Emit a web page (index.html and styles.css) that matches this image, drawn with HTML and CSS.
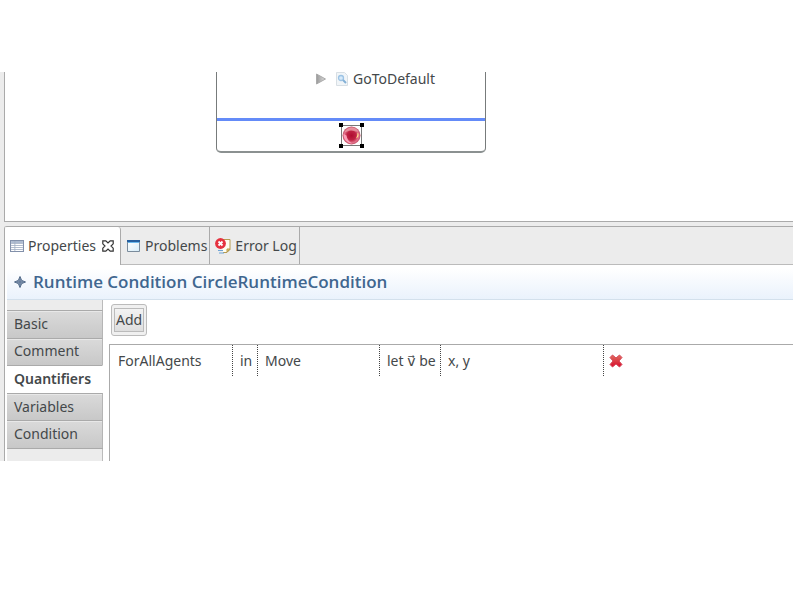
FILE: index.html
```html
<!DOCTYPE html>
<html lang="en">
<head>
<meta charset="utf-8">
<meta name="viewport" content="width=device-width, initial-scale=1">
<title>Runtime Condition</title>
<link rel="stylesheet" href="styles.css">
</head>
<body>
<main class="workbench">
  <section class="editor" aria-label="Diagram editor">
    <div class="node">
      <div class="tree-row">
        <svg width="10" height="12" viewBox="0 0 10 12"><defs><linearGradient id="arrow"><stop offset="0" stop-color="#999"/><stop offset="1" stop-color="#ddd"/></linearGradient></defs><path d="M.5 1v10L9.500 6z" fill="url(#arrow)" stroke="#aaa"/></svg>
        <svg width="12" height="14" viewBox="0 0 12 14"><path d="M.5 .5h8l3 3v10H.5z" fill="#f1f5f8" stroke="#d8dfe4"/><circle cx="5" cy="6" r="2.500" fill="#d7eafa" stroke="#9cc3e4" stroke-width="1.300"/><path d="M7 8l3 3" stroke="#84b0d6" stroke-width="2"/></svg>
        <span>GoToDefault</span>
      </div>
      <div class="node-footer">
        <svg width="25" height="25" viewBox="0 0 25 25"><defs><radialGradient id="ball" cx=".5" cy=".5" r=".5"><stop offset="0" stop-color="#b00c30"/><stop offset=".5" stop-color="#be2343"/><stop offset=".8" stop-color="#e2708a"/><stop offset="1" stop-color="#c04d64"/></radialGradient></defs><path d="M2 2.500h20M2 22.500h20M2.500 2v20M22.500 2v20" stroke="#777" fill="none"/><circle cx="12.500" cy="12.500" r="9" fill="url(#ball)"/><path d="M5.500 9.500C8 3.500 16 2.500 19.500 8.500c-4 .5-5-1.500-8-1-2 .3-3 1-6 2z" fill="#e79aa2" opacity=".8"/><path d="M4.500 11c0 6 4 9 9 9.500-4-2-5-4-6-8z" fill="#ffabc2" opacity=".85"/><path d="M18.500 9.500c2 2 1 5-1.500 6 1-2 1.500-3.500 1.500-6z" fill="#ffe08a"/><path d="M0 0h4v4H0zM21 0h4v4h-4zM0 21h4v4H0zM21 21h4v4h-4z" fill="#000"/></svg>
      </div>
    </div>
  </section>

  <section class="view">
    <div class="tabs" role="tablist">
      <button class="tab tab-active" role="tab" aria-selected="true">
        <svg width="14" height="12" viewBox="0 0 13 12" preserveAspectRatio="none"><path d="M.5 .5h12v11H.5z" fill="#fff" stroke="#8290aa"/><path d="M1 1h11v2H1z" fill="#aebbd0"/><path d="M1 3.500h11M1 5.500h11M1 7.500h11M1 9.500h11M4.500 1v10" stroke="#a3afc4" stroke-width=".8"/></svg>
        <span>Properties</span>
        <svg class="close" width="12" height="12" viewBox="0 0 12 12"><path d="M.8 .8h3L6 3 8.200 .8h3v3L9 6l2.200 2.200v3h-3L6 9l-2.200 2.200h-3v-3L3 6 .8 3.800z" fill="#fff" stroke="#333" stroke-width="1.200"/></svg>
      </button>
      <button class="tab" role="tab" aria-selected="false">
        <svg width="13" height="12" viewBox="0 0 13 12"><defs><linearGradient id="pane" x2="1" y2="1"><stop stop-color="#fff"/><stop offset="1" stop-color="#d5ecf8"/></linearGradient></defs><path d="M.5 .5h12v11H.5z" fill="url(#pane)" stroke="#7b8c9c"/><path d="M0 0h13v2H0z" fill="#245f9f"/><path d="M1 2.500h11" stroke="#69b9ee"/></svg>
        <span>Problems</span>
      </button>
      <button class="tab tab-log" role="tab" aria-selected="false">
        <svg width="16" height="16" viewBox="0 0 16 16"><path d="M5 1.500h10v10l-3 3H8" fill="#fffdf0" stroke="#b69b50"/><path d="M15 11h-3v3z" fill="#e4c56e" stroke="#b69b50"/><path d="M3 12.500h5M4 15h5" stroke="#6fa4d5"/><circle cx="5.500" cy="5.500" r="5.400" fill="#e5323f"/><path d="M3.500 3.500l4 4m0-4l-4 4" stroke="#fff" stroke-width="1.800"/></svg>
        <span>Error Log</span>
      </button>
    </div>

    <header class="title">
      <svg width="12" height="12" viewBox="0 0 12 12"><path d="M6 .5l1.600 3.900L11.500 6 7.600 7.600 6 11.500 4.400 7.600 .5 6l3.900-1.600z" fill="#91a3bb" stroke="#4d6685"/><path d="M6 3v6M3 6h6" stroke="#5b7392"/></svg>
      <h1>Runtime Condition CircleRuntimeCondition</h1>
    </header>

    <div class="content">
      <nav class="side">
        <div class="sections">
          <button class="section">Basic</button>
          <button class="section">Comment</button>
          <button class="section section-active">Quantifiers</button>
          <button class="section">Variables</button>
          <button class="section">Condition</button>
        </div>
      </nav>
      <div class="page">
        <button class="add"><span>Add</span></button>
        <div class="list">
          <table>
            <colgroup><col class="c-name"><col class="c-in"><col class="c-set"><col class="c-let"><col class="c-vars"><col></colgroup>
            <tbody>
              <tr>
                <td>ForAllAgents</td>
                <td>in</td>
                <td>Move</td>
                <td>let <span class="vector">v⃗</span> be</td>
                <td>x, y</td>
                <td><button class="remove" aria-label="Remove"><svg width="14" height="14" viewBox="0 0 14 14"><defs><linearGradient id="cross" x2="0" y2="1"><stop stop-color="#e0705f"/><stop offset="1" stop-color="#d8092b"/></linearGradient></defs><path d="M3.500 1L7 4l3.500-3L13 3.500 10 7l3 3.500-2.500 2.500L7 10l-3.500 3L1 10.500 4 7 1 3.500z" fill="url(#cross)" stroke="#d6485a" stroke-linejoin="round"/></svg></button></td>
              </tr>
            </tbody>
          </table>
        </div>
      </div>
    </div>
  </section>
</main>
</body>
</html>
```
FILE: styles.css
```css
* { box-sizing: border-box; }

body {
  margin: 0;
  padding: 72px 7px 0 0;
  background: #fff;
  color: #44484a;
  font: 14px/20px "Noto Sans", "DejaVu Sans", sans-serif;
}

button {
  margin: 0;
  padding: 0;
  border: 0;
  background: none;
  color: inherit;
  font: inherit;
}

svg { display: block; flex: none; }

.workbench {
  display: flex;
  flex-direction: column;
  gap: 4px;
  padding-left: 4px;
  background: #ececec;
}

.editor {
  position: relative;
  height: 150px;
  border-left: 1px solid #aaa;
  border-bottom: 1px solid #aaa;
  background: #fff;
}

.node {
  position: absolute;
  top: 0;
  left: 211px;
  width: 270px;
  border: 1px solid #777b7b;
  border-top: 0;
  border-bottom-width: 2px;
  border-bottom-color: #8b9191;
  border-radius: 0 0 5px 5px;
}

.tree-row {
  display: flex;
  align-items: center;
  gap: 5px;
  height: 46px;
  padding: 0 0 32px 99px;
}

.tree-row svg:first-child { margin-right: 5px; }

.node-footer {
  display: flex;
  justify-content: center;
  height: 33px;
  padding-top: 2px;
  border-top: 3px solid #648bf8;
}

.view {
  border-left: 1px solid #aaa;
  border-top: 1px solid #aaa;
  border-top-left-radius: 3px;
  background: #fff;
}

.tabs {
  display: flex;
  height: 38px;
  border-bottom: 1px solid #bbb;
  background: #ececec;
}

.tab {
  display: flex;
  align-items: center;
  gap: 5px;
  height: 37px;
  padding: 0 2px 0 6px;
  border-right: 1px solid #aaa;
  white-space: nowrap;
}

.tab-active {
  gap: 4px;
  height: 38px;
  padding: 0 6px 1px 5px;
  border-radius: 3px 3px 0 0;
  background: #fff;
}

.tab-log {
  gap: 4px;
  padding-left: 5px;
}

.close { margin-left: 2px; }

.title {
  display: flex;
  align-items: center;
  gap: 7px;
  height: 35px;
  margin-left: 2px;
  padding-left: 7px;
  border-bottom: 1px solid #d3e0ec;
  background: linear-gradient(#fff 10%, #eaf2fc);
  color: #40668f;
}

.title h1 {
  margin: 0;
  font-size: 17px;
  font-weight: 600;
  font-family: "Open Sans", "Noto Sans", sans-serif;
  line-height: 24px;
}

.content {
  display: flex;
  height: 161px;
  padding-left: 2px;
}

.side {
  flex: none;
  width: 96px;
  padding-top: 10px;
  border-right: 1px solid #bbb;
  background: #ececec;
}

.sections {
  display: flex;
  flex-direction: column;
  width: 96px;
  height: 139px;
  border-bottom: 1px solid #aaa;
}

.section {
  flex: 1;
  padding: 0 0 1px 7px;
  border-top: 1px solid #aaa;
  border-right: 1px solid #b5b5b5;
  background: linear-gradient(#dadada, #c8c8c8);
  box-shadow: inset 0 1px #e8e8e8;
  text-align: left;
}

.section-active {
  border-right-color: #fff;
  background: #fff;
  box-shadow: none;
  font-weight: 600;
}

.page {
  display: flex;
  flex: 1;
  flex-direction: column;
  align-items: flex-start;
  min-width: 0;
  padding: 4px 0 0 6px;
}

.add {
  height: 32px;
  margin: 0 0 8px 2px;
  padding: 3px 2px;
  border: 1px solid #bbb;
  border-radius: 3px;
  background: #f0f0f0;
}

.add span {
  display: block;
  height: 24px;
  padding: 0 1px;
  border: 1px solid #bbb;
  background: linear-gradient(#f3f3f3, #dedede);
  line-height: 22px;
}

.list {
  flex: 1;
  align-self: stretch;
  border-top: 1px solid #aaa;
  border-left: 1px solid #aaa;
}

table {
  width: 100%;
  table-layout: fixed;
  border-collapse: separate;
  border-spacing: 0;
}

td {
  height: 31px;
  padding: 0 0 0 7px;
  border-left: 1px dotted #444;
  white-space: nowrap;
}

td:first-child { border-left: 0; padding-left: 8px; }
td:last-child { padding-left: 5px; }

.c-name { width: 122px; }
.c-in { width: 25px; }
.c-set { width: 122px; }
.c-let { width: 61px; }
.c-vars { width: 163px; }

.vector { font-family: "DejaVu Sans", sans-serif; line-height: 1; }

.remove { display: block; }
```
